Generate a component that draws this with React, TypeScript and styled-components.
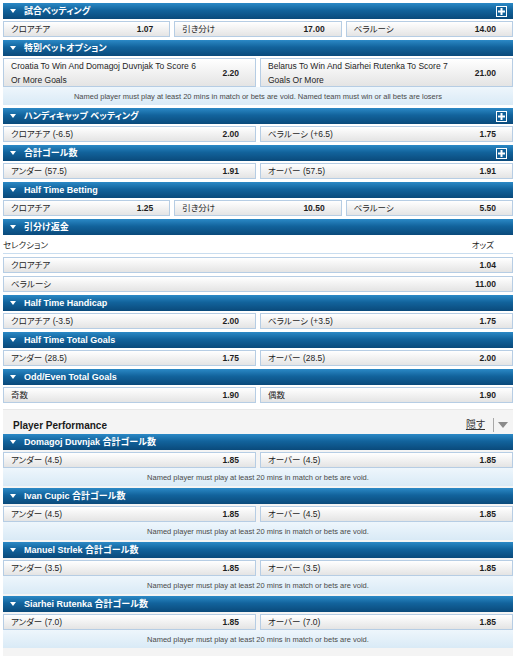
import React from 'react';
import styled, { createGlobalStyle } from 'styled-components';

const GlobalStyle = createGlobalStyle`
  html, body { margin: 0; padding: 0; background: #ffffff; }
  body {
    font-family: "Liberation Sans", Arial, "Noto Sans CJK JP", sans-serif;
    font-size: 8.5px;
    color: #1e1e1e;
    font-feature-settings: "palt";
  }
  * { box-sizing: border-box; }
`;

const Page = styled.div`
  width: 516px;
  padding: 3px 3px 0;
  display: flex;
  flex-direction: column;
`;

const Market = styled.section<{ $gap?: number }>`
  display: flex;
  flex-direction: column;
  margin-bottom: ${(p) => (p.$gap ?? 3)}px;
`;

const Header = styled.div`
  height: 16px;
  flex: none;
  display: flex;
  align-items: center;
  padding: 0 6px 0 7px;
  background: linear-gradient(#2b89c6 0%, #12639c 45%, #0a4a7b 100%);
  color: #ffffff;
  font-weight: bold;
  font-size: 9px;
  line-height: 12px;
  margin-bottom: 2px;
  overflow: hidden;
`;

const Caret = styled.span`
  width: 0;
  height: 0;
  border-left: 3px solid transparent;
  border-right: 3px solid transparent;
  border-top: 4px solid #ffffff;
  margin-right: 8px;
`;

const Title = styled.span`
  flex: 1;
  white-space: nowrap;
`;

const PlusBox = styled.span`
  width: 11px;
  height: 11px;
  border: 1px solid #ffffff;
  background: #0f5f98;
  display: flex;
  align-items: center;
  justify-content: center;
`;

const Row = styled.div<{ $cols: number }>`
  display: grid;
  grid-template-columns: repeat(${(p) => p.$cols}, 1fr);
  column-gap: 4px;
`;

const Cell = styled.div<{ $tall?: boolean }>`
  height: ${(p) => (p.$tall ? '29px' : '16px')};
  border: 1px solid #b6cde4;
  background: linear-gradient(#ffffff, #e4e4e4);
  display: flex;
  align-items: center;
  padding: 0 16px 0 7px;
  line-height: ${(p) => (p.$tall ? '14px' : '12px')};
  overflow: hidden;
`;

const Label = styled.span<{ $wrap?: boolean }>`
  flex: 1;
  max-width: ${(p) => (p.$wrap ? '192px' : 'none')};
  padding-right: 6px;
`;

const Odds = styled.span`
  font-weight: bold;
  white-space: nowrap;
  margin-left: auto;
`;

const Note = styled.div`
  height: 18px;
  display: flex;
  align-items: center;
  justify-content: center;
  background: linear-gradient(#eef6fc, #d9eaf6);
  color: #4a4a4a;
  font-size: 7.5px;
`;

const SelectionHead = styled.div`
  height: 17px;
  display: flex;
  align-items: center;
  justify-content: space-between;
  padding-right: 19px;
  border-bottom: 1px solid #c9ddef;
  background: #ffffff;
  line-height: 12px;
`;

const Stack = styled.div`
  display: flex;
  flex-direction: column;
  gap: 3px;
  margin-top: 3px;
`;

const PlayerSection = styled.div`
  margin-top: 3px;
  padding-top: 6px;
  background: #f4f4f4;
  border-top: 1px solid #e8e8e8;
  display: flex;
  flex-direction: column;
  min-height: 260px;
`;

const SectionBar = styled.div`
  height: 18px;
  display: flex;
  align-items: center;
  justify-content: space-between;
  padding: 0 5px 0 10px;
`;

const SectionTitle = styled.span`
  font-size: 10px;
  font-weight: bold;
  color: #1a1a1a;
`;

const Tools = styled.div`
  display: flex;
  align-items: center;
`;

const HideLink = styled.span`
  font-size: 10px;
  color: #333;
  text-decoration: underline;
  padding-right: 8px;
  border-right: 1px solid #a8a8a8;
  line-height: 14px;
`;

const DownCaret = styled.span`
  width: 0;
  height: 0;
  border-left: 5px solid transparent;
  border-right: 5px solid transparent;
  border-top: 6px solid #8a8a8a;
  margin-left: 4px;
`;

const Plus = () => (
  <PlusBox>
    <svg width="7" height="7" viewBox="0 0 7 7">
      <rect x="2.5" y="0" width="2" height="7" fill="#fff" />
      <rect x="0" y="2.5" width="7" height="2" fill="#fff" />
    </svg>
  </PlusBox>
);

type Sel = [string, string];

const MarketHeader: React.FC<{ title: string; plus?: boolean }> = ({ title, plus }) => (
  <Header>
    <Caret />
    <Title>{title}</Title>
    {plus && <Plus />}
  </Header>
);

const OddsRow: React.FC<{ items: Sel[] }> = ({ items }) => (
  <Row $cols={items.length}>
    {items.map(([l, o], i) => (
      <Cell key={i}>
        <Label>{l}</Label>
        <Odds>{o}</Odds>
      </Cell>
    ))}
  </Row>
);

const SimpleMarket: React.FC<{ title: string; plus?: boolean; items: Sel[] }> = ({ title, plus, items }) => (
  <Market>
    <MarketHeader title={title} plus={plus} />
    <OddsRow items={items} />
  </Market>
);

const NOTE_PLAYER = 'Named player must play at least 20 mins in match or bets are void.';

const PlayerMarket: React.FC<{ name: string; line: string }> = ({ name, line }) => (
  <Market $gap={2}>
    <MarketHeader title={`${name} 合計ゴール数`} />
    <OddsRow items={[[`アンダー (${line})`, '1.85'], [`オーバー (${line})`, '1.85']]} />
    <Note>{NOTE_PLAYER}</Note>
  </Market>
);

export default function App() {
  return (
    <>
      <GlobalStyle />
      <Page>
        <SimpleMarket
          title="試合ベッティング"
          plus
          items={[['クロアチア', '1.07'], ['引き分け', '17.00'], ['ベラルーシ', '14.00']]}
        />
        <Market>
          <MarketHeader title="特別ベットオプション" />
          <Row $cols={2}>
            <Cell $tall>
              <Label $wrap>Croatia To Win And Domagoj Duvnjak To Score 6 Or More Goals</Label>
              <Odds>2.20</Odds>
            </Cell>
            <Cell $tall>
              <Label $wrap>Belarus To Win And Siarhei Rutenka To Score 7 Goals Or More</Label>
              <Odds>21.00</Odds>
            </Cell>
          </Row>
          <Note>
            Named player must play at least 20 mins in match or bets are void. Named team must win or all bets are losers
          </Note>
        </Market>
        <SimpleMarket
          title="ハンディキャップ ベッティング"
          plus
          items={[['クロアチア (-6.5)', '2.00'], ['ベラルーシ (+6.5)', '1.75']]}
        />
        <SimpleMarket title="合計ゴール数" plus items={[['アンダー (57.5)', '1.91'], ['オーバー (57.5)', '1.91']]} />
        <SimpleMarket
          title="Half Time Betting"
          items={[['クロアチア', '1.25'], ['引き分け', '10.50'], ['ベラルーシ', '5.50']]}
        />
        <Market>
          <MarketHeader title="引分け返金" />
          <SelectionHead>
            <span>セレクション</span>
            <span>オッズ</span>
          </SelectionHead>
          <Stack>
            <OddsRow items={[['クロアチア', '1.04']]} />
            <OddsRow items={[['ベラルーシ', '11.00']]} />
          </Stack>
        </Market>
        <SimpleMarket
          title="Half Time Handicap"
          items={[['クロアチア (-3.5)', '2.00'], ['ベラルーシ (+3.5)', '1.75']]}
        />
        <SimpleMarket
          title="Half Time Total Goals"
          items={[['アンダー (28.5)', '1.75'], ['オーバー (28.5)', '2.00']]}
        />
        <SimpleMarket title="Odd/Even Total Goals" items={[['奇数', '1.90'], ['偶数', '1.90']]} />
        <PlayerSection>
          <SectionBar>
            <SectionTitle>Player Performance</SectionTitle>
            <Tools>
              <HideLink>隠す</HideLink>
              <DownCaret />
            </Tools>
          </SectionBar>
          <PlayerMarket name="Domagoj Duvnjak" line="4.5" />
          <PlayerMarket name="Ivan Cupic" line="4.5" />
          <PlayerMarket name="Manuel Strlek" line="3.5" />
          <PlayerMarket name="Siarhei Rutenka" line="7.0" />
        </PlayerSection>
      </Page>
    </>
  );
}
